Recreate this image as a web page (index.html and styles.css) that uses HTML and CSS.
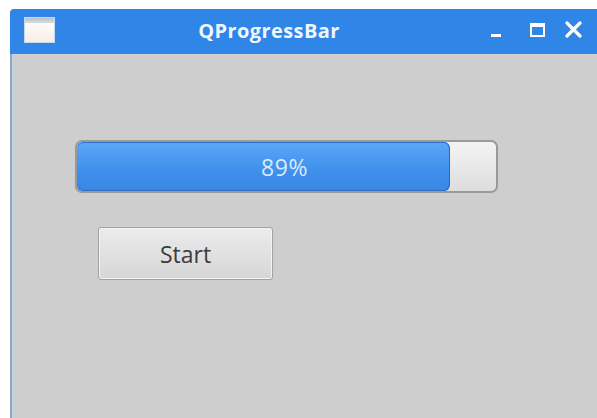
FILE: index.html
```html
<!DOCTYPE html>
<html>
<head>
<meta charset="utf-8">
<title>QProgressBar</title>
<link rel="stylesheet" href="styles.css">
</head>
<body>
<div class="window">
  <div class="titlebar">
    <div class="app-icon"><span class="app-icon-bar"></span></div>
    <div class="title">QProgressBar</div>
    <div class="controls">
      <svg class="ctl ctl-min" width="12" height="16" viewBox="0 0 12 16">
        <rect x="1" y="12" width="10" height="3" fill="#ffffff"/>
      </svg>
      <svg class="ctl ctl-max" width="17" height="16" viewBox="0 0 17 16">
        <rect x="2" y="2" width="13" height="12" fill="none" stroke="#ffffff" stroke-width="2"/>
        <rect x="2" y="2" width="13" height="3" fill="#ffffff"/>
      </svg>
      <svg class="ctl ctl-close" width="19" height="17" viewBox="0 0 19 17">
        <path d="M3 2 L16 15 M16 2 L3 15" stroke="#ffffff" stroke-width="3.2" stroke-linecap="round"/>
      </svg>
    </div>
  </div>
  <div class="client">
    <div class="progress">
      <div class="progress-chunk" style="width: 89%"></div>
      <div class="progress-label">89%</div>
    </div>
    <button class="push-button">Start</button>
  </div>
</div>
</body>
</html>
```

FILE: styles.css
```css
html, body {
  margin: 0;
  padding: 0;
  background: #ffffff;
  width: 597px;
  height: 418px;
  overflow: hidden;
}

.window {
  margin: 9px 0 0 10px;
  height: 409px;
  display: flex;
  flex-direction: column;
  font-family: "Open Sans", "DejaVu Sans", sans-serif;
}

.titlebar {
  height: 45px;
  flex: none;
  background: #2f86e6;
  border-top-left-radius: 4px;
  display: flex;
  align-items: center;
  position: relative;
}

.app-icon {
  width: 29px;
  height: 24px;
  margin: -4px 0 0 15px;
  background: linear-gradient(#ffffff, #f6eee6);
  box-shadow: 0 0 0 1px #c9d8ea;
  position: relative;
}

.app-icon-bar {
  display: block;
  height: 5px;
  background: linear-gradient(#b7c0cc, #d9dde2);
}

.title {
  flex: 1;
  text-align: center;
  color: #eef6ff;
  font-weight: bold;
  font-size: 20px;
  letter-spacing: 0.4px;
  word-spacing: 2px;
  margin: -3px 0 0 -6px;
}

.controls {
  display: flex;
  align-items: center;
  margin: -4px 14px 0 0;
}

.ctl {
  display: block;
}

.ctl-min {
  margin-right: 27px;
}

.ctl-max {
  margin-right: 18px;
}

.client {
  flex: 1;
  background: #cecece;
  border-left: 2px solid #8fa6c4;
  box-shadow: inset 3px 0 0 #c9d0da;
  padding: 86px 0 0 63px;
  display: flex;
  flex-direction: column;
  align-items: flex-start;
}

.progress {
  width: 419px;
  height: 49px;
  border: 2px solid #9a9a9a;
  border-radius: 7px;
  background: linear-gradient(#f4f4f4, #dddddd);
  position: relative;
  overflow: hidden;
}

.progress-chunk {
  height: 100%;
  background: linear-gradient(#5aa8f8, #3f8fec 60%, #3a86e4);
  border-right: 1px solid #2b66b8;
  border-radius: 6px;
  box-shadow: inset 0 -1px 0 #2c6dc2, inset 0 1px 0 #2f6fc4;
  box-sizing: border-box;
}

.progress-label {
  position: absolute;
  inset: 0;
  display: flex;
  align-items: center;
  justify-content: center;
  padding-right: 4px;
  color: #d6ebff;
  font-size: 23px;
  letter-spacing: 0.5px;
}

.push-button {
  margin: 34px 0 0 23px;
  width: 175px;
  height: 53px;
  border: 1px solid #a2a2a2;
  border-radius: 3px;
  background: linear-gradient(#ececec, #d6d6d6);
  box-shadow: inset 0 0 0 1px #f4f4f4;
  font-family: "Open Sans", "DejaVu Sans", sans-serif;
  font-size: 23px;
  color: #3c3c3c;
  padding: 0;
}
```
